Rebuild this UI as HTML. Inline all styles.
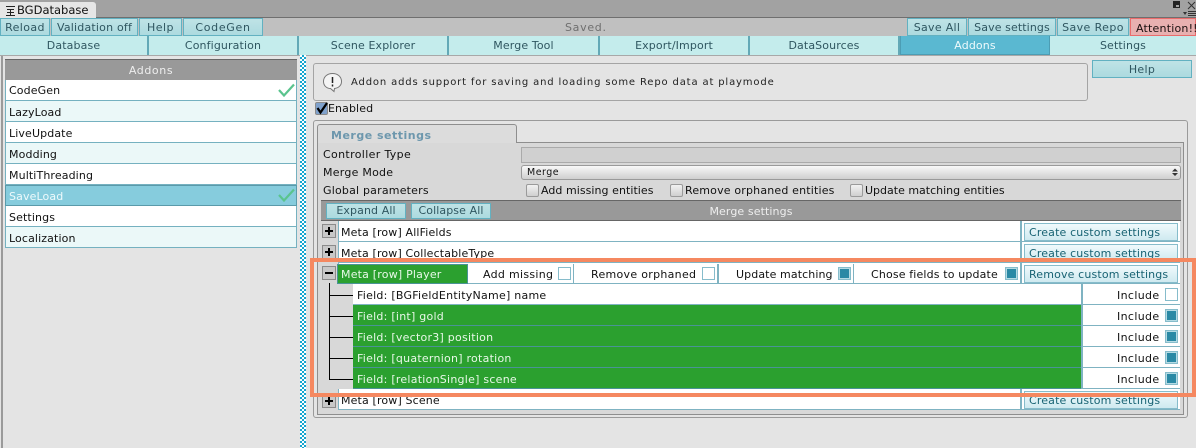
<!DOCTYPE html>
<html><head><meta charset="utf-8">
<style>
html,body{margin:0;padding:0;background:#e4e4e4;}
#r{position:relative;width:1196px;height:448px;overflow:hidden;background:#e4e4e4;font:11px "DejaVu Sans","Liberation Sans",sans-serif;color:#111;}
#r div,#r svg{position:absolute;box-sizing:border-box;}
.t{white-space:nowrap;line-height:13px;letter-spacing:.35px;}
.b{background:linear-gradient(#bfe3e6,#acdadf);border:1px solid #62b1c1;color:#2f5660;text-align:center;line-height:15px;white-space:nowrap;letter-spacing:.3px;}
.tab{background:#c4ecec;color:#2f5660;text-align:center;line-height:20px;height:19px;top:36px;border-right:2px solid #63a9b7;letter-spacing:.12px;white-space:nowrap;}
.row{left:5px;width:292px;height:21px;border-bottom:1px solid #75b1c0;border-left:1px solid #75b1c0;border-right:1px solid #75b1c0;padding-left:3px;letter-spacing:.12px!important;}
.w{background:#fff}.l{background:#ebf8f8}
.cb{width:13px;height:13px;border:1px solid #9a9a9a;border-radius:2px;background:linear-gradient(#f2f2f2,#cfcfcf);}
.mrow{background:#fff;left:338px;width:842px;height:21px;border-bottom:1px solid #7fb3c2;border-left:1px solid #7fb3c2;line-height:24px;padding-left:2px;letter-spacing:.15px;white-space:nowrap;}
.cc{left:1024px;width:154px;height:18px;background:linear-gradient(#f0fafc,#cfeaf0);border:1px solid #86bccb;color:#176273;line-height:18px;padding-left:4px;letter-spacing:.15px;white-space:nowrap;}
.sq{width:13px;height:13px;border:1px solid #86bccb;background:#fff;}
.sq.on{background:#2a89a5;box-shadow:inset 0 0 0 1px #b5dbe4;}
.plus{left:322px;width:14px;height:14px;background:#c8c8c8;border:1px solid #8b8b8b;}
.plus:before{content:"";position:absolute;left:2px;top:5px;width:8px;height:2px;background:#000;}
.plus.p:after{content:"";position:absolute;left:5px;top:2px;width:2px;height:8px;background:#000;}
.g{background:#2ba02f;color:#e8f8e8;}
.f{left:353px;width:728px;height:21px;line-height:24px;padding-left:4px;border-bottom:1px solid #4a9396;letter-spacing:.25px;white-space:nowrap;}
.inc{left:1081px;width:99px;height:21px;background:#fff;border-left:2px solid #7fb3c2;border-bottom:1px solid #7fb3c2;line-height:24px;padding-left:34px;letter-spacing:.35px;}
.vs{top:264px;width:2px;height:19px;background:#7fb3c2;}
.hl{background:#000;height:1px;left:329px;width:24px;}
.o{background:#f58860;}
</style></head><body>
<div id="r">
<!-- title bar -->
<div style="left:0;top:0;width:1196px;height:18px;background:#a2a2a2;border-bottom:1px solid #6f6f6f;"></div>
<div style="left:0;top:2px;width:96px;height:16px;background:#e6e6e6;border-radius:0 3px 0 0;"></div>
<svg style="left:5px;top:6px;" width="11" height="10"><path d="M1 .5H10M2 3.500H9M5.500 3.500V9M2 6.500H9M1 9.500H10" stroke="#222" stroke-width="1" fill="none"/></svg>
<div class="t" style="left:17px;top:4px;font-size:11.500px;letter-spacing:0;">BGDatabase</div>
<div style="left:1173px;top:1px;width:7px;height:7px;background:#222;border:2px solid #222;border-top-width:3px;background-clip:padding-box;"></div>
<div style="left:1176px;top:5px;width:3px;height:2px;background:#a2a2a2;"></div>
<svg style="left:1187px;top:1px;" width="9" height="9"><path d="M1 1L8 8M8 1L1 8" stroke="#333" stroke-width="1"/></svg>
<svg style="left:1183px;top:10px;" width="13" height="8"><path d="M0 2h4l-2 3z" fill="#333"/><path d="M5 1.500H13M5 3.500H13M5 5.500H13" stroke="#333"/></svg>
<!-- toolbar -->
<div style="left:0;top:18px;width:1196px;height:18px;background:#c0c0c0;"></div>
<div class="b" style="left:0;top:18px;width:50px;height:18px;line-height:18px;letter-spacing:.4px;">Reload</div>
<div class="b" style="left:51px;top:18px;width:87px;height:18px;line-height:18px;letter-spacing:.2px;">Validation off</div>
<div class="b" style="left:139px;top:18px;width:43px;height:18px;line-height:18px;letter-spacing:.5px;">Help</div>
<div class="b" style="left:183px;top:18px;width:80px;height:18px;line-height:18px;letter-spacing:.7px;">CodeGen</div>
<div class="t" style="left:565px;top:21px;color:#6f6f6f;letter-spacing:.7px;">Saved.</div>
<div class="b" style="left:907px;top:18px;width:60px;height:18px;line-height:18px;">Save All</div>
<div class="b" style="left:968px;top:18px;width:88px;height:18px;line-height:18px;letter-spacing:.1px;">Save settings</div>
<div class="b" style="left:1057px;top:18px;width:72px;height:18px;line-height:18px;letter-spacing:.4px;">Save Repo</div>
<div class="b" style="left:1130px;top:18px;width:66px;height:18px;line-height:19px;background:#e8b0b0;border-color:#ea6c6c;color:#1a1010;letter-spacing:.2px;padding-left:5px;text-align:left;">Attention!!</div>
<!-- tabs -->
<div class="tab" style="left:0;width:149px;">Database</div>
<div class="tab" style="left:149px;width:150px;">Configuration</div>
<div class="tab" style="left:299px;width:150px;">Scene Explorer</div>
<div class="tab" style="left:449px;width:151px;">Merge Tool</div>
<div class="tab" style="left:600px;width:150px;">Export/Import</div>
<div class="tab" style="left:750px;width:150px;">DataSources</div>
<div class="tab" style="left:900px;width:150px;background:#5ab8d1;color:#eefafc;border:1px solid #4c9db4;border-width:0 1px 1px 1px;">Addons</div>
<div class="tab" style="left:1050px;width:146px;border-right:0;">Settings</div>
<div style="left:0;top:55px;width:1196px;height:1px;background:#a8a8a8;"></div>
<!-- left panel -->
<div style="left:1px;top:56px;width:2px;height:392px;background:#9a9a9a;"></div>
<div style="left:5px;top:59px;width:292px;height:21px;background:#999;color:#eee;text-align:center;line-height:21px;letter-spacing:.6px;border-top:1px solid #666;">Addons</div>
<div class="row w t" style="top:80px;line-height:22px;">CodeGen</div>
<div class="row l t" style="top:101px;line-height:23px;">LazyLoad</div>
<div class="row w t" style="top:122px;line-height:23px;">LiveUpdate</div>
<div class="row l t" style="top:143px;line-height:23px;">Modding</div>
<div class="row w t" style="top:164px;line-height:23px;">MultiThreading</div>
<div class="row t" style="top:185px;line-height:21px;background:#86ccdd;color:#eefafc;border-color:#5a9aaa;border-top:1px solid #5a9aaa;">SaveLoad</div>
<div class="row w t" style="top:206px;line-height:23px;">Settings</div>
<div class="row l t" style="top:227px;line-height:23px;">Localization</div>
<svg style="left:277px;top:83px;" width="19" height="15"><path d="M2 7L7 12.500L17 1.500" stroke="#5ac48e" stroke-width="2.200" fill="none"/></svg>
<svg style="left:277px;top:188px;" width="19" height="15"><path d="M2 7L7 12.500L17 1.500" stroke="#5ac48e" stroke-width="2.200" fill="none"/></svg>
<!-- splitter -->
<div style="left:300px;top:55px;width:6px;height:393px;background-color:#fff;background-image:conic-gradient(#16a5cf 25%,#fff 0 50%,#16a5cf 0 75%,#fff 0);background-size:4px 4px;"></div>
<!-- info -->
<div style="left:313px;top:63px;width:775px;height:38px;border:1px solid #a4a4a4;border-radius:3px;"></div>
<svg style="left:322px;top:72px;" width="21" height="21"><path d="M10.500 1.500C5 1.500 1.500 5 1.500 9.500C1.500 14 5 16.500 8.500 16.500L12 19.500L12.500 16.500C16.500 16 19.500 13.500 19.500 9.500C19.500 5 16 1.500 10.500 1.500Z" fill="#f4f4f4" stroke="#777"/><path d="M10.500 5V11M10.500 12.500V14.500" stroke="#222" stroke-width="1.500"/></svg>
<div class="t" style="left:351px;top:76px;font-size:10px;letter-spacing:.85px;color:#222;">Addon adds support for saving and loading some Repo data at playmode</div>
<div class="b" style="left:1092px;top:60px;width:100px;height:18px;line-height:17px;">Help</div>
<div class="cb" style="left:315px;top:102px;background:#7fa1cc;border-color:#8a8a8a;"></div>
<svg style="left:315px;top:101px;" width="14" height="14"><path d="M2.500 7L5.500 11.500L12 2" stroke="#000" stroke-width="2.200" fill="none"/></svg>
<div class="t" style="left:328px;top:102px;letter-spacing:.1px;">Enabled</div>
<!-- merge box -->
<div style="left:313px;top:120px;width:875px;height:298px;border:1px solid #9a9a9a;border-radius:3px;"></div>
<div style="left:317px;top:142px;width:867px;height:273px;background:#d8d8d8;border:1px solid #8e8e8e;"></div>
<div style="left:317px;top:124px;width:200px;height:19px;background:#dcdcdc;border:1px solid #8e8e8e;border-radius:3px 3px 0 0;border-bottom:0;"></div>
<div class="t" style="left:331px;top:129px;font-weight:bold;color:#6d97ad;letter-spacing:.5px;">Merge settings</div>
<div class="t" style="left:323px;top:148px;">Controller Type</div>
<div style="left:521px;top:147px;width:660px;height:16px;background:#d0d0d0;border:1px solid #aaa;"></div>
<div class="t" style="left:323px;top:166px;letter-spacing:.25px;">Merge Mode</div>
<div style="left:521px;top:165px;width:660px;height:15px;background:linear-gradient(#f8f8f8,#cfcfcf);border:1px solid #9a9a9a;border-radius:3px;"></div>
<div class="t" style="left:527px;top:166px;font-size:9.500px;letter-spacing:.5px;">Merge</div>
<svg style="left:1172px;top:168px;" width="7" height="9"><path d="M0 3.500L3 .5L6 3.500ZM0 5L3 8L6 5Z" fill="#333"/></svg>
<div class="t" style="left:323px;top:184px;letter-spacing:.2px;">Global parameters</div>
<div class="cb" style="left:526px;top:184px;"></div>
<div class="t" style="left:541px;top:184px;letter-spacing:.05px;">Add missing entities</div>
<div class="cb" style="left:670px;top:184px;"></div>
<div class="t" style="left:685px;top:184px;letter-spacing:.18px;">Remove orphaned entities</div>
<div class="cb" style="left:850px;top:184px;"></div>
<div class="t" style="left:865px;top:184px;letter-spacing:0;">Update matching entities</div>
<div style="left:321px;top:200px;width:860px;height:21px;background:#999;border-top:1px solid #666;border-bottom:1px solid #666;color:#eee;text-align:center;line-height:21px;letter-spacing:.1px;">Merge settings</div>
<div class="b" style="left:326px;top:203px;width:80px;height:16px;line-height:14px;letter-spacing:.1px;">Expand All</div>
<div class="b" style="left:411px;top:203px;width:80px;height:16px;line-height:14px;letter-spacing:.1px;">Collapse All</div>
<!-- meta rows -->
<div class="mrow" style="top:221px;">Meta [row] AllFields</div>
<div class="plus p" style="top:224px;"></div><div class="cc" style="top:223px;">Create custom settings</div>
<div class="mrow" style="top:242px;">Meta [row] CollectableType</div>
<div class="plus p" style="top:245px;"></div><div class="cc" style="top:244px;">Create custom settings</div>
<div style="left:1020px;top:221px;width:2px;height:62px;background:#7fb3c2;"></div>
<!-- player -->
<div class="mrow" style="top:263px;padding:0;"></div>
<div class="plus" style="top:266px;"></div>
<div class="g t" style="left:337px;top:264px;width:131px;height:20px;line-height:19px;padding-left:3px;border:1px solid #4a9396;letter-spacing:.2px;">Meta [row] Player</div>
<div class="t" style="left:483px;top:268px;letter-spacing:.3px;">Add missing</div><div class="sq" style="left:558px;top:267px;"></div>
<div class="vs" style="left:573px;width:1px;"></div>
<div class="t" style="left:591px;top:268px;letter-spacing:.3px;">Remove orphaned</div><div class="sq" style="left:702px;top:267px;"></div>
<div class="vs" style="left:717px;"></div>
<div class="t" style="left:736px;top:268px;letter-spacing:.1px;">Update matching</div><div class="sq on" style="left:838px;top:267px;"></div>
<div class="vs" style="left:853px;width:1px;"></div>
<div class="t" style="left:871px;top:268px;letter-spacing:.15px;">Chose fields to update</div><div class="sq on" style="left:1005px;top:267px;"></div>
<div style="left:1020px;top:263px;width:2px;height:21px;background:#7fb3c2;"></div>
<div class="cc" style="top:265px;">Remove custom settings</div>
<!-- fields -->
<div style="left:329px;top:283px;width:1px;height:97px;background:#000;"></div>
<div class="hl" style="top:295px;"></div><div class="hl" style="top:316px;"></div><div class="hl" style="top:337px;"></div><div class="hl" style="top:358px;"></div><div class="hl" style="top:379px;"></div>
<div class="f" style="top:284px;background:#fff;border-bottom:1px solid #7fb3c2;">Field: [BGFieldEntityName] name</div>
<div class="f g" style="top:305px;">Field: [int] gold</div>
<div class="f g" style="top:326px;">Field: [vector3] position</div>
<div class="f g" style="top:347px;">Field: [quaternion] rotation</div>
<div class="f g" style="top:368px;">Field: [relationSingle] scene</div>
<div class="inc" style="top:284px;">Include</div><div class="sq" style="left:1165px;top:288px;"></div>
<div class="inc" style="top:305px;">Include</div><div class="sq on" style="left:1165px;top:309px;"></div>
<div class="inc" style="top:326px;">Include</div><div class="sq on" style="left:1165px;top:330px;"></div>
<div class="inc" style="top:347px;">Include</div><div class="sq on" style="left:1165px;top:351px;"></div>
<div class="inc" style="top:368px;">Include</div><div class="sq on" style="left:1165px;top:372px;"></div>
<!-- scene -->
<div class="mrow" style="top:389px;height:21px;">Meta [row] Scene</div>
<div class="plus p" style="top:394px;"></div><div style="left:1020px;top:389px;width:2px;height:21px;background:#7fb3c2;"></div><div class="cc" style="top:391px;">Create custom settings</div>
<!-- highlight -->
<div class="o" style="left:310px;top:258px;width:886px;height:4px;"></div>
<div class="o" style="left:310px;top:393px;width:886px;height:4px;"></div>
<div class="o" style="left:310px;top:258px;width:4px;height:139px;"></div>
<div class="o" style="left:1192px;top:258px;width:4px;height:139px;"></div>
</div>
</body></html>
